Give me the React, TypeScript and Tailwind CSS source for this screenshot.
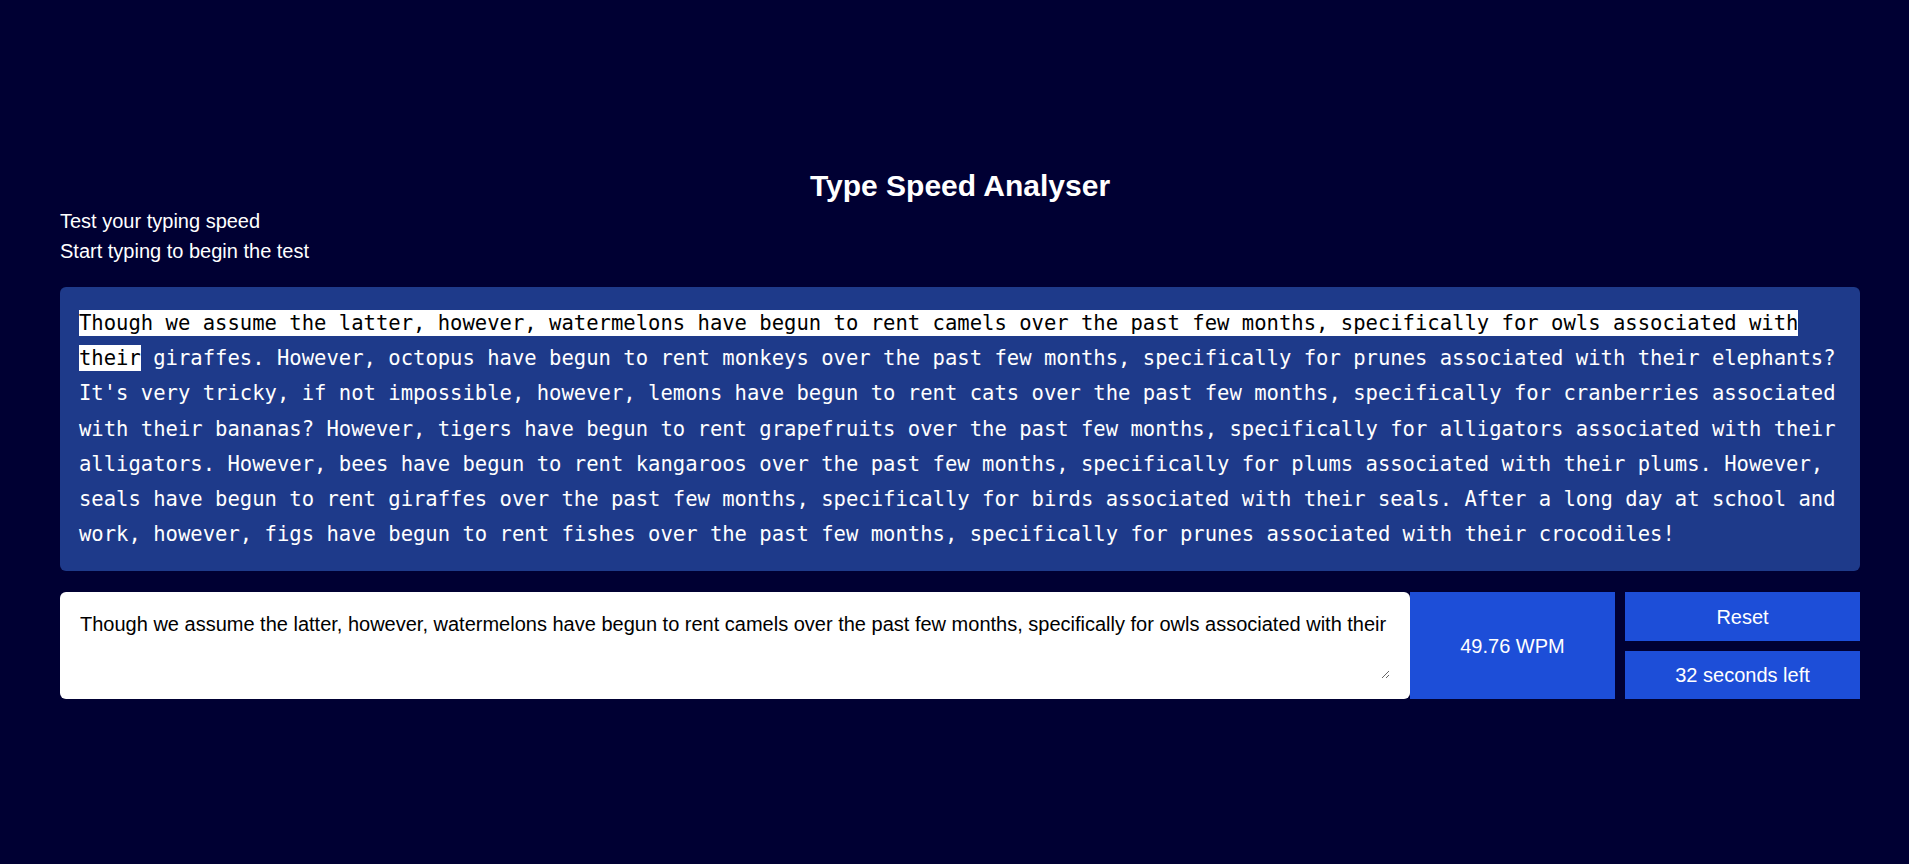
import React from "react";

const typed =
  "Though we assume the latter, however, watermelons have begun to rent camels over the past few months, specifically for owls associated with their";

const firstLine =
  "Though we assume the latter, however, watermelons have begun to rent camels over the past few months, specifically for owls associated with";

const rest =
  " giraffes. However, octopus have begun to rent monkeys over the past few months, specifically for prunes associated with their elephants? It's very tricky, if not impossible, however, lemons have begun to rent cats over the past few months, specifically for cranberries associated with their bananas? However, tigers have begun to rent grapefruits over the past few months, specifically for alligators associated with their alligators. However, bees have begun to rent kangaroos over the past few months, specifically for plums associated with their plums. However, seals have begun to rent giraffes over the past few months, specifically for birds associated with their seals. After a long day at school and work, however, figs have begun to rent fishes over the past few months, specifically for prunes associated with their crocodiles!";

export default function App() {
  return (
    <div className="min-h-screen bg-[#000033] font-['Liberation_Sans',Arial,sans-serif] text-white">
      <div className="ml-[60px] w-[1800px] pt-[168px]">
        <h1 className="text-center text-[30px] font-bold leading-[36px]">Type Speed Analyser</h1>
        <p className="mt-[2px] text-[20px] leading-[30px]">Test your typing speed</p>
        <p className="text-[20px] leading-[30px]">Start typing to begin the test</p>
        <div className="mt-[21px] rounded-md bg-[#1e3a8a] px-[19px] py-[19px] font-['DejaVu_Sans_Mono',monospace] text-[20.55px] leading-[35.2px] text-white">
          <span className="bg-white py-[1px] text-black">{firstLine}</span>{" "}
          <span className="bg-white py-[1px] text-black">their</span>
          {rest}
        </div>
        <div className="mt-[21px] flex h-[107px]">
          <div className="flex min-w-0 flex-1 rounded-md bg-white p-[20px]">
            <textarea
              className="h-full w-full border-0 bg-white p-0 text-[20px] leading-[24px] text-black outline-none"
              defaultValue={typed}
            />
          </div>
          <div className="flex w-[205px] items-center justify-center bg-[#1d4ed8] text-[20px]">49.76 WPM</div>
          <div className="ml-[10px] flex w-[235px] flex-col gap-[10px]">
            <button className="flex flex-1 items-center justify-center bg-[#1d4ed8] text-[20px] text-white">Reset</button>
            <div className="flex flex-1 items-center justify-center bg-[#1d4ed8] text-[20px]">32 seconds left</div>
          </div>
        </div>
      </div>
    </div>
  );
}
